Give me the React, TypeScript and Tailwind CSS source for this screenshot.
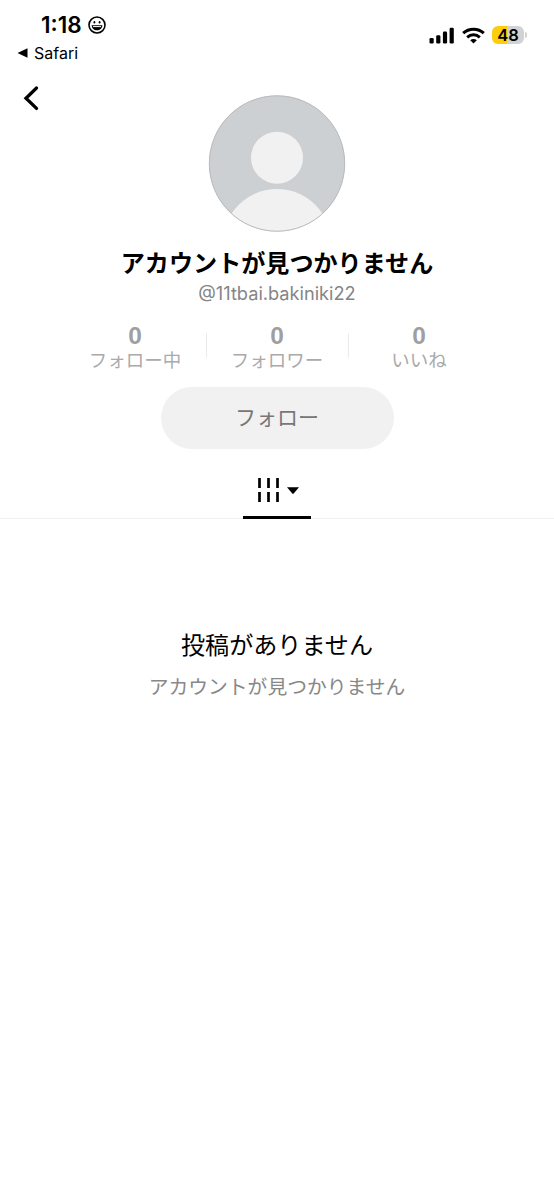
const stats = [
	{ label: 'フォロー中', value: 0 },
	{ label: 'フォロワー', value: 0 },
	{ label: 'いいね', value: 0 },
];

function StatusBar() {
	return (
		<header className="flex h-16 justify-between pl-[17px] pr-[27px]">
			<div className="pt-[14px]">
				<div className="flex h-[22px] items-center gap-[6px] pl-6">
					<span className="text-[22.500px] font-semibold leading-[22px]">1:18</span>
					<svg width="18" height="18" viewBox="0 0 18 18" fill="none">
						<circle cx="9" cy="9" r="8" stroke="#000" strokeWidth="1.6" />
						<ellipse cx="6.4" cy="6.2" rx="0.9" ry="1.2" fill="#000" />
						<ellipse cx="11.600" cy="6.2" rx="0.9" ry="1.2" fill="#000" />
						<path d="M3.600 9.200h10.800c-.2 3.100-2.400 5.100-5.400 5.100s-5.200-2-5.400-5.100z" fill="#000" />
						<path d="M5 10.600h8" stroke="#fff" strokeWidth="1" />
					</svg>
				</div>
				<div className="mt-[7px] flex h-5 items-center gap-[6px]">
					<svg width="11" height="10" viewBox="0 0 11 10">
						<path d="M0.500 5L10.500 0.300v9.400z" fill="#000" />
					</svg>
					<span className="text-[16px] leading-5">Safari</span>
				</div>
			</div>
			<div className="flex h-[70px] items-center">
				<svg width="26" height="17" viewBox="0 0 26 17">
					<rect x="0.500" y="11" width="4.200" height="5.500" rx="1.300" />
					<rect x="7.200" y="8.200" width="4.200" height="8.300" rx="1.300" />
					<rect x="13.900" y="4.600" width="4.200" height="11.900" rx="1.300" />
					<rect x="20.600" y="0.700" width="4.200" height="15.800" rx="1.300" />
				</svg>
				<svg className="ml-[7px]" width="23" height="17" viewBox="0 0 23 17" fill="none" stroke="#000" strokeWidth="3">
					<path d="M1.200 6.200C7 .8 16 .8 21.800 6.200" />
					<path d="M5.200 10.400c3.600-3.400 9-3.400 12.600 0" />
					<path d="M11.500 16.500L8.200 13.200c1.800-1.600 4.800-1.600 6.600 0z" fill="#000" stroke="none" />
				</svg>
				<div className="ml-[7px] flex h-[18px] w-[32px] items-center justify-center rounded-[6px] bg-linear-to-r from-[#fccd0c] from-48% to-[#d2d2d2] to-48%">
					<span className="text-[16.500px] font-semibold leading-[18px]">48</span>
				</div>
				<div className="ml-px h-[6px] w-[2px] rounded-r-full bg-[#d2d2d2]" />
			</div>
		</header>
	);
}

function Avatar() {
	return (
		<svg width="138" height="138" viewBox="0 0 138 138">
			<defs>
				<clipPath id="avatar">
					<circle cx="69" cy="69.500" r="68" />
				</clipPath>
			</defs>
			<g clipPath="url(#avatar)">
				<rect width="138" height="138" fill="#ccd0d3" />
				<circle cx="69" cy="63.700" r="26" fill="#f1f1f1" />
				<circle cx="69" cy="149" r="54" fill="#f1f1f1" />
			</g>
			<circle cx="69" cy="69.500" r="67.700" fill="none" stroke="#b9bbbd" strokeWidth="1" />
		</svg>
	);
}

export default function App() {
	return (
		<div className="min-h-[1199px] w-full bg-white font-['Inter','Noto_Sans_CJK_JP',sans-serif] text-black">
			<StatusBar />

			<div className="grid grid-cols-[1fr_138px_1fr] pt-[30px]">
				<button className="-mt-[10px] ml-[22px] h-[28px] w-[18px]" aria-label="戻る">
					<svg width="18" height="28" viewBox="0 0 18 28" fill="none" stroke="#000" strokeWidth="3.300" strokeLinecap="round">
						<path d="M14.500 4L4 14.200 14.500 24.400" />
					</svg>
				</button>
				<Avatar />
			</div>

			{/* Profile */}
			<section className="flex flex-col items-center">
				<h1 className="mt-[16px] text-[24.100px] font-bold leading-8">アカウントが見つかりません</h1>
				<p className="mt-[3px] text-[18.200px] leading-5 text-[#858585]">@11tbai.bakiniki22</p>

				<div className="mt-[23px] flex h-11 items-center">
					{stats.map((stat, i) => (
						<div key={stat.label} className="flex items-center">
							{i > 0 && <div className="-mt-[5px] h-[25px] w-px bg-[#ebebeb]" />}
							<div className="flex w-[141px] flex-col items-center gap-1">
								<span className="font-['Liberation_Sans',sans-serif] text-[24.500px] font-bold leading-5 text-[#9f9f9f]">{stat.value}</span>
								<span className="text-[18.500px] leading-5 text-[#aaa]">{stat.label}</span>
							</div>
						</div>
					))}
				</div>

				<button className="mt-[17px] h-[62px] w-[233px] rounded-full bg-[#f1f1f1] text-[21px] text-[#777]">
					フォロー
				</button>
			</section>

			{/* Tabs */}
			<div className="mt-[18px] flex h-[52px] justify-center border-b border-[#f0f0f0]">
				<div className="flex h-[52px] w-[68px] items-center justify-center gap-[7px] border-b-[3px] border-black pb-[3px] pl-px">
					<svg width="23" height="26" viewBox="0 0 23 26" stroke="#000" strokeWidth="2.700">
						<path d="M2.500 1v10M11.500 1v10M20.500 1v10M2.500 15v10M11.500 15v10M20.500 15v10" />
					</svg>
					<svg width="12" height="7" viewBox="0 0 12 7">
						<path d="M0 .3h12L6.700 6.600q-.7.6-1.400 0z" />
					</svg>
				</div>
			</div>

			{/* Empty state */}
			<section className="flex flex-col items-center pt-[111px]">
				<h2 className="text-[24.100px] font-normal leading-8">投稿がありません</h2>
				<p className="mt-[13px] text-[19.800px] leading-6 text-[#888]">アカウントが見つかりません</p>
			</section>
		</div>
	);
}
